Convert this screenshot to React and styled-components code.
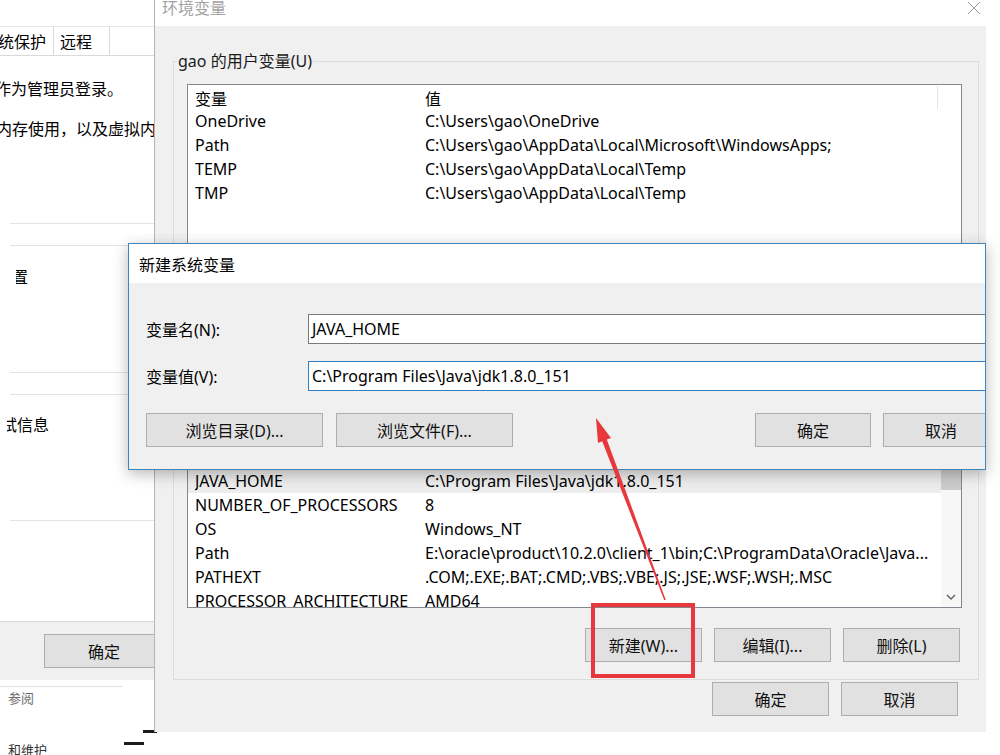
import React from 'react';
import styled, { createGlobalStyle } from 'styled-components';

const FONT = `"Noto Sans", "Noto Sans CJK SC", sans-serif`;

const GlobalStyle = createGlobalStyle`
  html, body {
    margin: 0;
    padding: 0;
    background: #ffffff;
  }
  body {
    font-family: ${FONT};
    font-size: 16px;
    color: #000;
  }
  * { box-sizing: border-box; }
`;

const colors = {
  face: '#f0f0f0',
  btn: '#e1e1e1',
  btnBorder: '#adadad',
  listBorder: '#828790',
  group: '#dcdcdc',
  focus: '#2f7fc1',
  red: '#e8383d',
};

/* ---------- page behind everything (control panel) ---------- */

const Desktop = styled.div`
  position: relative;
  width: 1000px;
  height: 755px;
  overflow: hidden;
  background: #fff;
`;

const ControlPanel = styled.div`
  display: flex;
  flex-direction: column;
  padding: 686px 0 0 8px;
  font-family: ${FONT};
  font-size: 13px;
  color: #6d6d6d;
`;

const PanelLink = styled.div`
  line-height: 18px;
  margin-top: ${(p) => p.$mt || 0}px;
  color: ${(p) => p.$color || '#6d6d6d'};
`;

const PanelRule = styled.div`
  width: 123px;
  height: 1px;
  margin-left: -8px;
  background: #e3e3e3;
`;

const Mark = styled.div`
  position: absolute;
  left: ${(p) => p.$x}px;
  top: ${(p) => p.$y}px;
  width: ${(p) => p.$w}px;
  height: 3px;
  background: #1c1c1c;
`;

/* ---------- system properties window (left) ---------- */

const SysWindow = styled.div`
  position: absolute;
  left: 0;
  top: 0;
  width: 160px;
  height: 680px;
  background: #fff;
  display: flex;
  flex-direction: column;
  overflow: hidden;
`;

const TabStrip = styled.div`
  margin-top: 26px;
  height: 30px;
  border-top: 1px solid #e6e6e6;
  border-bottom: 1px solid #d9d9d9;
  display: flex;
  align-items: stretch;
`;

const Tab = styled.div`
  flex: none;
  width: ${(p) => p.$w}px;
  display: flex;
  align-items: center;
  padding-left: ${(p) => p.$pl ?? 6}px;
  border-right: 1px solid #d9d9d9;
  font-size: 16px;
  white-space: nowrap;
  overflow: hidden;
`;

const TabClip = styled.span`
  margin-left: ${(p) => p.$ml}px;
`;

const SysBody = styled.div`
  flex: 1;
  display: flex;
  flex-direction: column;
`;

const SysText = styled.div`
  margin-top: ${(p) => p.$mt}px;
  margin-left: ${(p) => p.$ml || 0}px;
  line-height: 20px;
  height: 20px;
  font-size: 16px;
  white-space: nowrap;
  overflow: hidden;
  text-indent: ${(p) => p.$indent || 0}px;
`;

const SysRule = styled.div`
  margin-top: ${(p) => p.$mt}px;
  margin-left: 10px;
  height: 1px;
  background: #e3e3e3;
`;

const SysFooter = styled.div`
  margin-top: auto;
  height: 59px;
  background: ${colors.face};
  border-top: 1px solid #dadada;
  display: flex;
  align-items: center;
  padding-left: 44px;
`;

/* ---------- shared controls ---------- */

const Button = styled.div`
  flex: none;
  width: ${(p) => p.$w || 117}px;
  height: 34px;
  margin-left: ${(p) => p.$ml || 0}px;
  background: ${colors.btn};
  border: 1px solid ${colors.btnBorder};
  display: flex;
  align-items: center;
  justify-content: center;
  font-size: 16px;
  color: #111;
  white-space: nowrap;
`;

/* ---------- environment variables dialog ---------- */

const EnvWindow = styled.div`
  position: absolute;
  left: 154px;
  top: 0;
  width: 832px;
  height: 732px;
  background: ${colors.face};
  border-left: 1px solid #b5b5b5;
  display: flex;
  flex-direction: column;
  overflow: hidden;
`;

const EnvTitleBar = styled.div`
  flex: none;
  height: 26px;
  background: #fff;
  display: flex;
  justify-content: space-between;
  align-items: flex-start;
  padding: 0 5px 0 7px;
`;

const EnvTitle = styled.span`
  font-size: 16px;
  line-height: 16px;
  color: #a3a3a3;
`;

const CloseIcon = styled.svg`
  margin-top: 1px;
`;

const EnvBody = styled.div`
  flex: 1;
  display: flex;
  flex-direction: column;
  padding: 0 7px 0 18px;
`;

const Group = styled.fieldset`
  margin: ${(p) => p.$mt}px 0 0 0;
  padding: 0 16px 17px 13px;
  border: 1px solid ${colors.group};
  min-width: 0;
  display: flex;
  flex-direction: column;
`;

const GroupLegend = styled.legend`
  margin-left: -10px;
  padding: 0 1px;
  font-size: 16px;
  line-height: 20px;
  color: #1a1a1a;
`;

const ListBox = styled.div`
  margin-top: 13px;
  height: ${(p) => p.$h}px;
  background: #fff;
  border: 1px solid ${colors.listBorder};
  display: flex;
  overflow: hidden;
`;

const ListRows = styled.div`
  flex: 1;
  display: flex;
  flex-direction: column;
  padding-top: 1px;
`;

const Row = styled.div`
  flex: none;
  height: ${(p) => (p.$header ? 23 : 24)}px;
  display: flex;
  align-items: center;
  padding-left: 7px;
  background: ${(p) => (p.$selected ? '#ededed' : 'transparent')};
  font-size: 16px;
  white-space: nowrap;
`;

const NameCell = styled.span`
  flex: none;
  width: 230px;
  overflow: hidden;
`;

const ValueCell = styled.span`
  flex: 1;
  overflow: hidden;
`;

const HeaderEdge = styled.span`
  flex: none;
  width: 24px;
  align-self: stretch;
  border-left: 1px solid #e5e5e5;
`;

const ScrollBar = styled.div`
  flex: none;
  width: 20px;
  background: #f7f7f7;
  display: flex;
  flex-direction: column;
  align-items: center;
`;

const ScrollThumb = styled.div`
  width: 20px;
  height: 22px;
  margin-top: 47px;
  background: #cdcdcd;
`;

const ScrollArrow = styled.svg`
  margin-top: auto;
  margin-bottom: 6px;
`;

const ButtonRow = styled.div`
  display: flex;
  justify-content: flex-end;
  gap: 12px;
  margin-top: ${(p) => p.$mt}px;
  padding-right: ${(p) => p.$pr || 0}px;
`;

/* ---------- new system variable dialog ---------- */

const NewVarDialog = styled.div`
  position: absolute;
  left: 128px;
  top: 243px;
  width: 858px;
  height: 227px;
  background: ${colors.face};
  border: 1px solid #3d86bd;
  box-shadow: 0 4px 14px rgba(0, 0, 0, 0.28);
  display: flex;
  flex-direction: column;
  overflow: hidden;
`;

const DialogTitleBar = styled.div`
  flex: none;
  height: 39px;
  background: #fff;
  display: flex;
  align-items: center;
  padding-left: 10px;
  font-size: 16px;
`;

const DialogBody = styled.div`
  flex: 1;
  display: flex;
  flex-direction: column;
  padding-left: 17px;
`;

const FieldRow = styled.div`
  display: flex;
  align-items: center;
  margin-top: ${(p) => p.$mt}px;
`;

const FieldLabel = styled.span`
  flex: none;
  width: 162px;
  font-size: 16px;
`;

const TextInput = styled.div`
  flex: none;
  width: 700px;
  height: 30px;
  background: #fff;
  border: 1px solid ${(p) => (p.$focused ? colors.focus : '#7a7a7a')};
  display: flex;
  align-items: center;
  padding-left: 3px;
  font-size: 16px;
  white-space: nowrap;
`;

const DialogButtons = styled.div`
  display: flex;
  margin-top: 22px;
`;

/* ---------- annotation ---------- */

const Highlight = styled.div`
  position: absolute;
  left: 591px;
  top: 603px;
  width: 104px;
  height: 75px;
  border: 4px solid ${colors.red};
`;

const ArrowLayer = styled.svg`
  position: absolute;
  left: 0;
  top: 0;
  pointer-events: none;
`;

const userVars = [
  ['OneDrive', 'C:\\Users\\gao\\OneDrive'],
  ['Path', 'C:\\Users\\gao\\AppData\\Local\\Microsoft\\WindowsApps;'],
  ['TEMP', 'C:\\Users\\gao\\AppData\\Local\\Temp'],
  ['TMP', 'C:\\Users\\gao\\AppData\\Local\\Temp'],
];

const systemVars = [
  ['ComSpec', 'C:\\WINDOWS\\system32\\cmd.exe'],
  ['JAVA_HOME', 'C:\\Program Files\\Java\\jdk1.8.0_151', true],
  ['NUMBER_OF_PROCESSORS', '8'],
  ['OS', 'Windows_NT'],
  ['Path', 'E:\\oracle\\product\\10.2.0\\client_1\\bin;C:\\ProgramData\\Oracle\\Java...'],
  ['PATHEXT', '.COM;.EXE;.BAT;.CMD;.VBS;.VBE;.JS;.JSE;.WSF;.WSH;.MSC'],
  ['PROCESSOR_ARCHITECTURE', 'AMD64'],
];

const VarList = ({ vars, height, scroll }) => (
  <ListBox $h={height}>
    <ListRows>
      <Row $header>
        <NameCell>变量</NameCell>
        <ValueCell>值</ValueCell>
        {!scroll && <HeaderEdge />}
      </Row>
      {vars.map(([name, value, selected]) => (
        <Row key={name + value} $selected={selected}>
          <NameCell>{name}</NameCell>
          <ValueCell>{value}</ValueCell>
        </Row>
      ))}
    </ListRows>
    {scroll && (
      <ScrollBar>
        <ScrollThumb />
        <ScrollArrow width="12" height="8" viewBox="0 0 12 8">
          <path d="M2 2 L6 6 L10 2" fill="none" stroke="#606060" strokeWidth="1.4" />
        </ScrollArrow>
      </ScrollBar>
    )}
  </ListBox>
);

export default function App() {
  return (
    <>
      <GlobalStyle />
      <Desktop>
        <ControlPanel>
          <PanelRule />
          <PanelLink $mt={2}>参阅</PanelLink>
          <PanelLink $mt={34} $color="#333">和维护</PanelLink>
        </ControlPanel>
        <Mark $x={143} $y={730} $w={14} />
        <Mark $x={124} $y={742} $w={20} />

        <SysWindow>
          <TabStrip>
            <Tab $w={54} $pl={0}>
              <TabClip $ml={-18}>系统保护</TabClip>
            </Tab>
            <Tab $w={56}>远程</Tab>
          </TabStrip>
          <SysBody>
            <SysText $mt={23} $indent={-5}>作为管理员登录。</SysText>
            <SysText $mt={20} $indent={-4}>内存使用，以及虚拟内存。</SysText>
            <SysRule $mt={84} />
            <SysRule $mt={21} />
            <SysText $mt={21} $ml={16} $indent={-20}>设置</SysText>
            <SysRule $mt={85} />
            <SysRule $mt={21} />
            <SysText $mt={20} $ml={7} $indent={-6}>试信息</SysText>
            <SysRule $mt={85} />
          </SysBody>
          <SysFooter>
            <Button $w={120}>确定</Button>
          </SysFooter>
        </SysWindow>

        <EnvWindow>
          <EnvTitleBar>
            <EnvTitle>环境变量</EnvTitle>
            <CloseIcon width="14" height="14" viewBox="0 0 14 14">
              <path d="M1 1 L13 13 M13 1 L1 13" stroke="#9a9a9a" strokeWidth="1" />
            </CloseIcon>
          </EnvTitleBar>
          <EnvBody>
            <Group $mt={25}>
              <GroupLegend>gao 的用户变量(U)</GroupLegend>
              <VarList vars={userVars} height={216} />
              <ButtonRow $mt={16} $pr={2}>
                <Button>新建(N)...</Button>
                <Button>编辑(E)...</Button>
                <Button>删除(D)</Button>
              </ButtonRow>
            </Group>
            <Group $mt={19}>
              <GroupLegend>系统变量(S)</GroupLegend>
              <VarList vars={systemVars} height={188} scroll />
              <ButtonRow $mt={20} $pr={2}>
                <Button>新建(W)...</Button>
                <Button>编辑(I)...</Button>
                <Button>删除(L)</Button>
              </ButtonRow>
            </Group>
            <ButtonRow $mt={2} $pr={21}>
              <Button>确定</Button>
              <Button>取消</Button>
            </ButtonRow>
          </EnvBody>
        </EnvWindow>

        <NewVarDialog>
          <DialogTitleBar>新建系统变量</DialogTitleBar>
          <DialogBody>
            <FieldRow $mt={31}>
              <FieldLabel>变量名(N):</FieldLabel>
              <TextInput>JAVA_HOME</TextInput>
            </FieldRow>
            <FieldRow $mt={17}>
              <FieldLabel>变量值(V):</FieldLabel>
              <TextInput $focused>{'C:\\Program Files\\Java\\jdk1.8.0_151'}</TextInput>
            </FieldRow>
            <DialogButtons>
              <Button $w={177}>浏览目录(D)...</Button>
              <Button $w={177} $ml={13}>浏览文件(F)...</Button>
              <Button $w={116} $ml={242}>确定</Button>
              <Button $w={116} $ml={12}>取消</Button>
            </DialogButtons>
          </DialogBody>
        </NewVarDialog>

        <Highlight />
        <ArrowLayer width="1000" height="755" viewBox="0 0 1000 755">
          <polygon
            points="596,418 611,437.9 606.8,439.5 665.7,599.8 664.3,600.2 602.2,441.3 598,442.9"
            fill={colors.red}
          />
        </ArrowLayer>
      </Desktop>
    </>
  );
}
